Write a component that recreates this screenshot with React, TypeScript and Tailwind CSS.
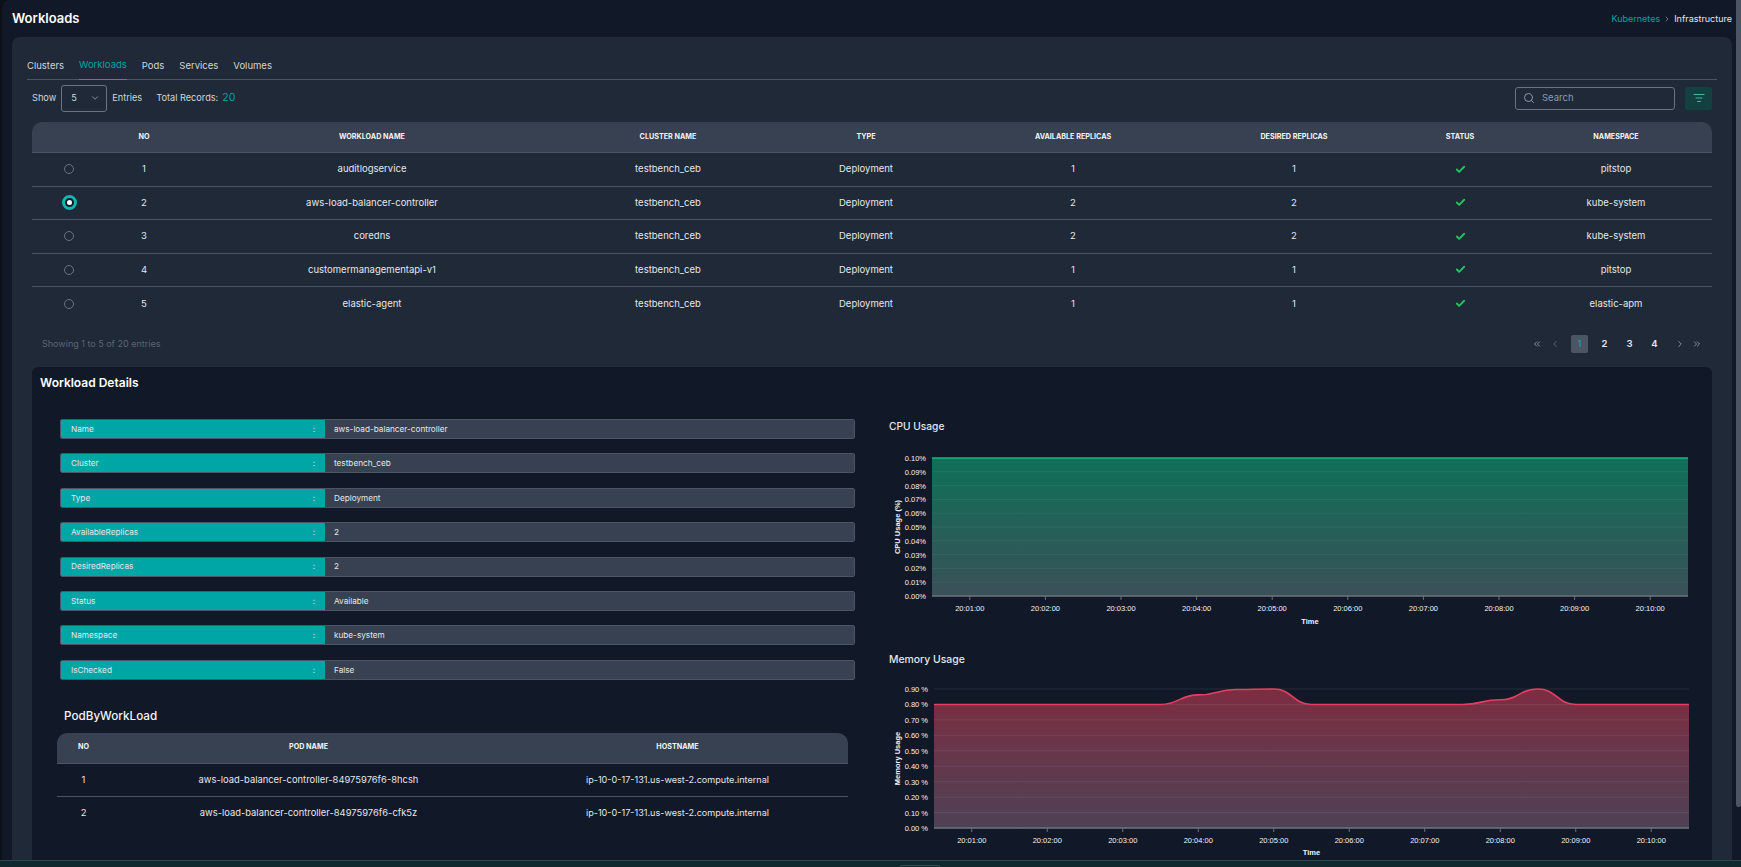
import React from "react";
import { ChevronDown, Search, ListFilter, Check, ChevronsLeft, ChevronLeft, ChevronRight, ChevronsRight } from "lucide-react";

const rows = [
  ["1", "auditlogservice", "testbench_ceb", "Deployment", "1", "1", "pitstop"],
  ["2", "aws-load-balancer-controller", "testbench_ceb", "Deployment", "2", "2", "kube-system"],
  ["3", "coredns", "testbench_ceb", "Deployment", "2", "2", "kube-system"],
  ["4", "customermanagementapi-v1", "testbench_ceb", "Deployment", "1", "1", "pitstop"],
  ["5", "elastic-agent", "testbench_ceb", "Deployment", "1", "1", "elastic-apm"],
];
const details = [
  ["Name", "aws-load-balancer-controller"],
  ["Cluster", "testbench_ceb"],
  ["Type", "Deployment"],
  ["AvailableReplicas", "2"],
  ["DesiredReplicas", "2"],
  ["Status", "Available"],
  ["Namespace", "kube-system"],
  ["IsChecked", "False"],
];
const times = ["20:01:00", "20:02:00", "20:03:00", "20:04:00", "20:05:00", "20:06:00", "20:07:00", "20:08:00", "20:09:00", "20:10:00"];

function Chart({ id, yLabels, yTitle, titleX, line, fill, top, bottom, w, h, gridColor }: { id: string; yLabels: string[]; yTitle: string; titleX: number; line: string; fill: string; top: string; bottom: string; w: number; h: number; gridColor: string }) {
  const x0 = 62;
  const y0 = 8;
  const n = yLabels.length - 1;
  const step = w / 10;
  return (
    <svg width="860" height="182" className="block" style={{ fontFamily: "'Liberation Sans', sans-serif" }}>
      <defs>
        <linearGradient id={id} x1="0" y1="0" x2="0" y2="1">
          <stop offset="0" stopColor={top} />
          <stop offset="1" stopColor={bottom} />
        </linearGradient>
      </defs>
      <path d={`${fill} L${x0 + w} ${y0 + h} L${x0} ${y0 + h} Z`} fill={`url(#${id})`} />
      {yLabels.map((l, i) => {
        const y = y0 + (h * i) / n;
        return (
          <g key={l}>
            <line x1={x0} x2={x0 + w} y1={y} y2={y} stroke={gridColor} strokeWidth="1" />
            <text x={x0 - 6} y={y + 3} textAnchor="end" fontSize="7.5" fill="#f3f4f6">{l}</text>
          </g>
        );
      })}
      <path d={fill} fill="none" stroke={line} strokeWidth="1.6" />
      <line x1={x0} x2={x0 + w} y1={y0 + h} y2={y0 + h} stroke="#6b7280" strokeWidth="1.5" />
      {times.map((t, i) => {
        const x = x0 + step * (i + 0.5);
        return (
          <g key={t}>
            <line x1={x} x2={x} y1={y0 + h} y2={y0 + h + 4} stroke="#6b7280" />
            <text x={x} y={y0 + h + 15} textAnchor="middle" fontSize="7.5" fill="#f3f4f6">{t}</text>
          </g>
        );
      })}
      <text x={x0 + w / 2} y={174} textAnchor="middle" fontSize="7.5" fontWeight="700" fill="#f3f4f6">Time</text>
      <text transform={`translate(${titleX} ${y0 + h / 2}) rotate(-90)`} textAnchor="middle" fontSize="7.5" fontWeight="700" fill="#f3f4f6">{yTitle}</text>
    </svg>
  );
}

function memPath() {
  const w = 755, s = w / 20, y0 = 8, h = 139;
  const Y = (v: number) => y0 + h - (v / 0.9) * h;
  const X = (i: number) => 62 + i * s;
  const pts: [number, number][] = [[0, 0.8], [6, 0.8], [7, 0.862], [8, 0.897], [9, 0.9], [10, 0.8], [14, 0.8], [15, 0.83], [16, 0.9], [17, 0.8], [20, 0.8]];
  let d = `M${X(pts[0][0])} ${Y(pts[0][1])}`;
  for (let i = 1; i < pts.length; i++) {
    const [a, b] = pts[i - 1];
    const [c, e] = pts[i];
    const mx = (X(a) + X(c)) / 2;
    d += ` C${mx} ${Y(b)} ${mx} ${Y(e)} ${X(c)} ${Y(e)}`;
  }
  return d;
}

export default function App() {
  return (
    <div className="relative h-[867px] w-[1741px] overflow-hidden bg-[#0b1019] text-[#e5e7eb]" style={{ fontFamily: "Inter, 'Liberation Sans', sans-serif" }}>
      <div className="ml-[2px] flex h-[860px] w-[1739px] flex-col rounded-tl-[8px] bg-[#111827] pl-[10px] pr-[9px]">
        <div className="flex h-[37px] shrink-0 items-center justify-between">
          <h1 className="text-[13px] font-semibold text-white">Workloads</h1>
          <div className="flex items-center gap-[3px] text-[9px]">
            <span className="text-[#00a5a5]">Kubernetes</span>
            <ChevronRight size={8} className="text-gray-400" />
            <span className="text-[#e5e7eb]">Infrastructure</span>
          </div>
        </div>

        <div className="flex min-h-0 flex-1 flex-col rounded-t-[8px] bg-[#1f2937] px-[15px] pt-[16px]">
          <div className="flex h-[27px] shrink-0 items-end gap-[15px] border-b border-[#4b5563] text-[9.5px]">
            <span className="pb-[6px] text-[#d1d5db]">Clusters</span>
            <span className="-mb-px border-b border-[#00a5a5] pb-[7px] text-[#00a5a5]">Workloads</span>
            <span className="pb-[6px] text-[#d1d5db]">Pods</span>
            <span className="pb-[6px] text-[#d1d5db]">Services</span>
            <span className="pb-[6px] text-[#d1d5db]">Volumes</span>
          </div>

          <div className="mb-[6px] flex h-[36px] shrink-0 items-center justify-between px-[5px] text-[9.2px] text-[#d1d5db]">
            <div className="flex items-center">
              <span>Show</span>
              <div className="ml-[5px] flex h-[27px] w-[46px] items-center justify-between rounded-[3px] border border-[#6b7280] pl-[9px] pr-[6px]">
                <span>5</span>
                <ChevronDown size={10} className="text-gray-400" />
              </div>
              <span className="ml-[5px]">Entries</span>
              <span className="ml-[14px]">Total Records:</span>
              <span className="ml-[4px] text-[10.5px] text-[#00a5a5]">20</span>
            </div>
            <div className="flex items-center gap-[10px]">
              <div className="flex h-[23px] w-[160px] items-center gap-[7px] rounded-[3px] border border-[#6b7280] pl-[7px] text-[9.5px] text-[#8b9ab0]">
                <Search size={12} />
                <span>Search</span>
              </div>
              <div className="flex h-[23px] w-[27px] items-center justify-center rounded-[2px] bg-[#134040]">
                <ListFilter size={12} className="text-[#4fb3a9]" />
              </div>
            </div>
          </div>

          <div className="mx-[5px] shrink-0">
            <div className="grid h-[31px] grid-cols-[74px_76px_380px_212px_184px_230px_212px_120px_192px] items-center rounded-t-[10px] border-b border-[#4b5563] bg-[#374151] text-center text-[7.2px] font-bold text-[#f3f4f6]">
              <span />
              <span>NO</span>
              <span>WORKLOAD NAME</span>
              <span>CLUSTER NAME</span>
              <span>TYPE</span>
              <span>AVAILABLE REPLICAS</span>
              <span>DESIRED REPLICAS</span>
              <span>STATUS</span>
              <span>NAMESPACE</span>
            </div>
            {rows.map((r, i) => (
              <div key={r[0]} className={`grid h-[33.5px] grid-cols-[74px_76px_380px_212px_184px_230px_212px_120px_192px] items-center text-center text-[9.5px] text-[#e5e7eb] ${i < 4 ? "border-b border-[#4b5563]" : ""}`}>
                <span className="flex justify-center">
                  {i === 1 ? (
                    <span className="flex h-[15px] w-[15px] items-center justify-center rounded-full border-[3px] border-[#0fb5ae] bg-[#111827]">
                      <span className="h-[5px] w-[5px] rounded-full bg-white" />
                    </span>
                  ) : (
                    <span className="h-[10px] w-[10px] rounded-full border border-[#6b7280]" />
                  )}
                </span>
                <span>{r[0]}</span>
                <span>{r[1]}</span>
                <span>{r[2]}</span>
                <span>{r[3]}</span>
                <span>{r[4]}</span>
                <span>{r[5]}</span>
                <span className="flex justify-center"><Check size={11} strokeWidth={4} className="text-[#22c55e]" /></span>
                <span>{r[6]}</span>
              </div>
            ))}
          </div>

          <div className="mx-[5px] flex h-[46.5px] shrink-0 items-center justify-between pl-[10px] pr-[10px] text-[9px]">
            <span className="text-[#5b6575]">Showing 1 to 5 of 20 entries</span>
            <div className="flex items-center text-[9.5px] text-[#e5e7eb]">
              <ChevronsLeft size={10} className="text-gray-400" />
              <ChevronLeft size={10} className="ml-[8px] text-gray-500" />
              <span className="ml-[11px] mr-[4px] flex h-[18px] w-[17px] items-center justify-center rounded-[2px] bg-[#4b5563] text-[#22a5b5]">1</span>
              <span className="flex w-[25px] justify-center font-semibold">2</span>
              <span className="flex w-[25px] justify-center font-semibold">3</span>
              <span className="flex w-[25px] justify-center font-semibold">4</span>
              <ChevronRight size={10} className="ml-[8px] text-gray-400" />
              <ChevronsRight size={10} className="ml-[7px] text-gray-400" />
            </div>
          </div>

          <div className="mx-[5px] flex min-h-0 flex-1 flex-col rounded-t-[6px] bg-[#111827]">
            <h2 className="h-[52px] shrink-0 pl-[8px] pt-[7px] text-[12px] font-semibold text-white">Workload Details</h2>
            <div className="flex min-h-0 flex-1">
              <div className="w-[857px] shrink-0 pl-[28px]">
                <div className="flex w-[795px] flex-col gap-[14.4px]">
                  {details.map(([k, v]) => (
                    <div key={k} className="flex h-[20px] overflow-hidden rounded-[2px] border border-[#4b5563] text-[8.2px]">
                      <div className="flex w-[264px] items-center justify-between bg-[#00a5a5] px-[10px] text-[#e5e7eb]">
                        <span>{k}</span>
                        <span>:</span>
                      </div>
                      <div className="flex flex-1 items-center bg-[#374151] pl-[9px] text-[#e5e7eb]">{v}</div>
                    </div>
                  ))}
                </div>
                <h3 className="pl-[4px] pt-[27px] text-[11.7px] font-medium leading-[18px] text-[#f3f4f6]">PodByWorkLoad</h3>
                <div className="ml-[-3px] mt-[8px] w-[791px]">
                  <div className="grid h-[31px] grid-cols-[53px_397px_341px] items-center rounded-t-[10px] border-b border-[#4b5563] bg-[#374151] text-center text-[7.2px] font-bold text-[#f3f4f6]">
                    <span>NO</span>
                    <span>POD NAME</span>
                    <span>HOSTNAME</span>
                  </div>
                  <div className="grid h-[33px] grid-cols-[53px_397px_341px] items-center border-b border-[#4b5563] text-center text-[9.4px]">
                    <span>1</span>
                    <span>aws-load-balancer-controller-84975976f6-8hcsh</span>
                    <span className="text-[9.1px]">ip-10-0-17-131.us-west-2.compute.internal</span>
                  </div>
                  <div className="grid h-[33px] grid-cols-[53px_397px_341px] items-center text-center text-[9.4px]">
                    <span>2</span>
                    <span>aws-load-balancer-controller-84975976f6-cfk5z</span>
                    <span className="text-[9.1px]">ip-10-0-17-131.us-west-2.compute.internal</span>
                  </div>
                </div>
              </div>
              <div className="min-w-0 flex-1">
                <h3 className="text-[10.2px] font-medium leading-[14px] text-[#e5e7eb]">CPU Usage</h3>
                <div className="ml-[-19px] mt-[17px]">
                  <Chart id="cpu" w={756} h={138} titleX={30} yTitle="CPU Usage (%)" line="#10b981" top="#0f7058" bottom="#3a5058" gridColor="rgba(255,255,255,0.06)"
                    yLabels={["0.10%", "0.09%", "0.08%", "0.07%", "0.06%", "0.05%", "0.04%", "0.03%", "0.02%", "0.01%", "0.00%"]}
                    fill={`M62 8 L818 8`} />
                </div>
                <h3 className="mt-[21px] text-[10.4px] font-medium leading-[14px] text-[#e5e7eb]">Memory Usage</h3>
                <div className="ml-[-17px] mt-[14px]">
                  <Chart id="mem" w={755} h={139} titleX={28} yTitle="Memory Usage" line="#e63e62" top="#7d2d41" bottom="#4e4155" gridColor="rgba(255,255,255,0.08)"
                    yLabels={["0.90 %", "0.80 %", "0.70 %", "0.60 %", "0.50 %", "0.40 %", "0.30 %", "0.20 %", "0.10 %", "0.00 %"]}
                    fill={memPath()} />
                </div>
              </div>
            </div>
          </div>
        </div>
      </div>
      <div className="absolute bottom-0 left-0 h-[7px] w-full border-t border-[#2a4a4c] bg-[#12282f]" />
      <div className="absolute bottom-0 left-[900px] h-[2px] w-[40px] rounded-t-[3px] border border-b-0 border-[#2f5052]" />
      <div className="absolute right-0 top-0 h-[807px] w-[5px] rounded-b bg-[#4b5563]" />
    </div>
  );
}
